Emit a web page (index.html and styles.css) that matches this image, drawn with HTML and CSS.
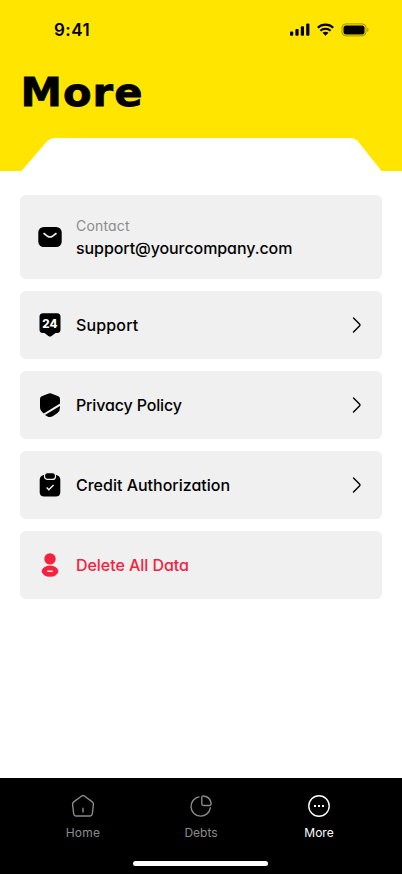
FILE: index.html
```html
<!DOCTYPE html>
<html lang="en">
<head>
<meta charset="utf-8">
<meta name="viewport" content="width=device-width, initial-scale=1">
<title>More</title>
<link rel="stylesheet" href="styles.css">
</head>
<body>
<div class="screen">
  <header class="header">
    <div class="status">
      <span class="time">9:41</span>
      <svg class="indicators" width="80" height="14" viewBox="0 0 80 14">
        <rect x="0" y="8.4" width="3.2" height="4.3" rx="1"/>
        <rect x="5.4" y="6" width="3.2" height="6.7" rx="1"/>
        <rect x="10.8" y="3.2" width="3.2" height="9.5" rx="1"/>
        <rect x="16.2" y="0.5" width="3.2" height="12.2" rx="1"/>
        <g fill="none" stroke="#000" stroke-width="2.1">
          <path d="M27.8 4.8C32 .6 39 .6 43.2 4.8"/>
          <path d="M30.4 7.7C33.2 5 37.8 5 40.6 7.7"/>
        </g>
        <path d="M32.5 9.8c1.8-1.5 4.2-1.5 6 0l-3 3z"/>
        <rect x="52" y=".9" width="24" height="12" rx="3.8" fill="none" stroke="#000" stroke-opacity=".38"/>
        <rect x="53.5" y="2.4" width="21" height="9" rx="2.5"/>
        <path d="M77.3 4.8v4.2c1.7-.7 1.7-3.5 0-4.2z" fill-opacity=".4"/>
      </svg>
    </div>
    <h1 class="title">More</h1>
    <svg class="tab-shape" width="402" height="33" viewBox="0 0 402 33">
      <path d="M21.5 33L46.5 4Q50 0 55 0H350Q355 0 358.500 4L381.500 33Z" fill="#fff"/>
    </svg>
  </header>

  <main class="list">
    <section class="card contact">
      <svg class="icon" viewBox="0 0 24 24">
        <rect x="0.300" y="2" width="23.400" height="20" rx="5.500"/>
        <path d="M6 8.500l3.600 2.800q2.400 1.500 4.800 0L18 8.500" fill="none" stroke="#f0f0f0" stroke-width="1.600" stroke-linecap="round"/>
      </svg>
      <div class="details">
        <span class="caption">Contact</span>
        <span class="label email">support@yourcompany.com</span>
      </div>
    </section>

    <a class="card">
      <svg class="icon" viewBox="0 0 24 24">
        <path d="M5 .3H19Q22.500.3 22.500 3.800V16.500Q22.500 20 19 20H17.500L13.600 23Q12 24 10.400 23L6.500 20H5Q1.500 20 1.500 16.500V3.800Q1.500.3 5 .3Z"/>
        <text class="badge-text" x="11.900" y="14.600" text-anchor="middle">24</text>
      </svg>
      <span class="label support">Support</span>
      <svg class="chevron" viewBox="0 0 10 16"><path d="M1.500 1L7.700 7.300Q8.300 8 7.700 8.700L1.500 15"/></svg>
    </a>

    <a class="card">
      <svg class="icon" viewBox="0 0 24 24">
        <path d="M3.700 3.200L10.800.5Q12 0 13.200.5L20.300 3.200Q22 4 22 6V10.600L5.800 20.400Q2 18 2 14V6Q2 4 3.700 3.200Z"/>
        <path d="M22 13V14.500Q22 18 19.500 20L14.700 23.200Q12 24.600 9.500 23.400L7 22Z"/>
      </svg>
      <span class="label privacy">Privacy Policy</span>
      <svg class="chevron" viewBox="0 0 10 16"><path d="M1.500 1L7.700 7.300Q8.300 8 7.700 8.700L1.500 15"/></svg>
    </a>

    <a class="card">
      <svg class="icon" viewBox="0 0 24 24">
        <path d="M5.500 2H18.500Q22.300 3 22.300 7V19Q22.300 23.600 17.700 23.600H6.300Q1.700 23.600 1.700 19V7Q1.700 3 5.500 2Z"/>
        <rect x="6.500" y="-.400" width="11" height="6.800" rx="3" stroke="#f0f0f0" stroke-width="1.200"/>
        <path d="M8.600 14.500l2.200 2.200 4.800-4.700" fill="none" stroke="#f0f0f0" stroke-width="1.500"/>
      </svg>
      <span class="label credit">Credit Authorization</span>
      <svg class="chevron" viewBox="0 0 10 16"><path d="M1.500 1L7.700 7.300Q8.300 8 7.700 8.700L1.500 15"/></svg>
    </a>

    <a class="card danger">
      <svg class="icon" viewBox="0 0 24 24">
        <circle cx="12" cy="5.900" r="5.700"/>
        <ellipse cx="12" cy="18.200" rx="8.300" ry="5.600"/>
        <path d="M9.800 18.200H14.200" stroke="#f0f0f0" stroke-width="1.600" stroke-linecap="round"/>
      </svg>
      <span class="label delete">Delete All Data</span>
    </a>
  </main>

  <footer class="footer">
    <nav class="tabs">
      <a class="tab">
        <svg class="tab-icon" viewBox="0 0 24 24">
          <path d="M10.700 2Q12 1.100 13.300 2L21.300 7.900Q22.600 8.900 22.400 10.500L21.300 20Q21 22 19 22H5Q3 22 2.700 20L1.600 10.500Q1.400 8.900 2.700 7.900ZM12 14.200V18"/>
        </svg>
        <span class="home">Home</span>
      </a>
      <a class="tab">
        <svg class="tab-icon" viewBox="0 0 24 24">
          <path d="M10 2.900A9.700 9.700 0 1 0 21.300 13.800M12.800 3.300Q12.800 1.800 14.500 2Q21 2.800 22.100 9Q22.400 11.500 20.300 11.500H14.500Q12.800 11.500 12.800 9.800Z"/>
        </svg>
        <span>Debts</span>
      </a>
      <a class="tab active">
        <svg class="tab-icon" viewBox="0 0 24 24">
          <circle cx="12" cy="12" r="10.200"/>
          <g class="dots"><rect x="7" y="11" width="2" height="2"/><rect x="11" y="11" width="2" height="2"/><rect x="15" y="11" width="2" height="2"/></g>
        </svg>
        <span class="more">More</span>
      </a>
    </nav>
    <div class="home-bar"></div>
  </footer>
</div>
</body>
</html>
```
FILE: styles.css
```css
* { box-sizing: border-box; }
body {
  margin: 0;
  background: #fff;
  color: #000;
  font-family: Inter, "Liberation Sans", sans-serif;
  font-feature-settings: "cv11";
}
.screen { display: flex; flex-direction: column; width: 402px; height: 874px; }
.header { display: flex; flex-direction: column; height: 171px; background: #ffe500; }
.status {
  display: flex;
  justify-content: space-between;
  align-items: center;
  height: 60px;
  padding: 0 32px 0 54px;
}
.time { font-size: 17px; font-weight: 600; line-height: 22px; letter-spacing: .5px; }
.title {
  align-self: flex-start;
  height: 64px;
  margin: 0 0 14px;
  padding-left: 19px;
  font: 700 38.500px/66px "DejaVu Sans", sans-serif;
  letter-spacing: 1px;
  transform: scaleX(1.08);
  transform-origin: 0 0;
  -webkit-text-stroke: .8px #000;
}
.tab-shape { display: block; }
.list { display: flex; flex: 1; flex-direction: column; gap: 12px; padding: 24px 20px; }
.card {
  display: flex;
  align-items: center;
  height: 68px;
  padding: 0 20px 0 18px;
  border-radius: 6px;
  background: #f0f0f0;
}
.contact { height: 84px; }
.icon { width: 24px; height: 24px; margin-right: 14px; overflow: visible; }
.badge-text { fill: #fff; font-size: 11.500px; font-weight: 800; }
.details { display: flex; flex-direction: column; padding-top: 2px; }
.caption { color: #8b8b8b; font-size: 14px; line-height: 20px; letter-spacing: .18px; }
.label { font-size: 16px; line-height: 24px; font-weight: 450; }
.email { letter-spacing: -.08px; }
.support { letter-spacing: .15px; }
.privacy { letter-spacing: -.15px; }
.delete { letter-spacing: -.05px; }
.chevron {
  width: 10px;
  height: 16px;
  margin-left: auto;
  fill: none;
  stroke: #000;
  stroke-width: 1.400;
  stroke-linecap: round;
}
.danger { color: #f5223f; }
.danger .icon { fill: #f5223f; }
.footer {
  display: flex;
  flex-direction: column;
  align-items: center;
  justify-content: space-between;
  height: 96px;
  padding: 16px 24px 8px;
  background: #000;
}
.tabs { display: grid; grid-template-columns: repeat(3, 118px); }
.tab {
  display: flex;
  flex-direction: column;
  align-items: center;
  gap: 7px;
  color: #8b8b8b;
  font-size: 12px;
  line-height: 16px;
}
.home { letter-spacing: .25px; }
.tab-icon { width: 24px; height: 24px; fill: none; stroke: currentColor; stroke-width: 1.400; stroke-linecap: round; }
.active { color: #fff; }
.dots { fill: #fff; stroke: none; }
.home-bar { width: 135px; height: 5px; margin-right: 1px; border-radius: 3px; background: #fff; }
```
